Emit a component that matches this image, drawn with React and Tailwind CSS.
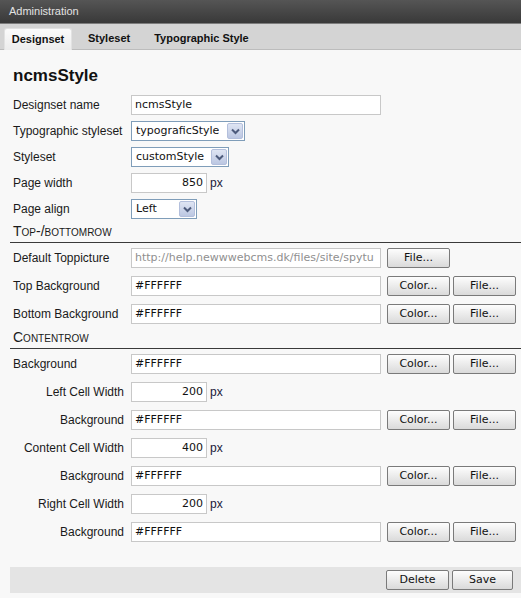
import React from 'react';

const sans = "font-['Liberation_Sans',Arial,sans-serif]";
const verd = "font-['DejaVu_Sans',Verdana,sans-serif]";

function Input({ value, wide = true, right = false, gray = false }) {
  return (
    <div
      className={`h-[20px] ${wide ? 'w-[250px]' : 'w-[76px]'} bg-white border border-[#c8c8c8] flex items-center px-[3px] overflow-hidden whitespace-nowrap ${verd} text-[11px] ${right ? 'justify-end' : ''} ${gray ? 'text-[#8f8f8f]' : 'text-[#111]'}`}
    >
      {value}
    </div>
  );
}

function Select({ value, w }) {
  return (
    <div className={`h-[20px] ${w} bg-white border border-[#7f9db9] flex items-center justify-between pl-[4px] pr-[1px] ${verd} text-[11px] text-[#111]`}>
      <span className="whitespace-nowrap overflow-hidden">{value}</span>
      <span className="w-[16px] h-[16px] shrink-0 ml-[2px] rounded-[2px] border border-[#b3bfdc] bg-gradient-to-b from-[#dfe5f3] to-[#bcc7e2] flex items-center justify-center">
        <svg width="9" height="7" viewBox="0 0 9 7">
          <path d="M1 1.5 L4.5 5 L8 1.5" fill="none" stroke="#4d5b7c" strokeWidth="2" />
        </svg>
      </span>
    </div>
  );
}

function Btn({ children, w = 'w-[63px]' }) {
  return (
    <div className={`h-[20px] ${w} shrink-0 border border-[#7a7a7a] rounded-[2px] bg-gradient-to-b from-[#fdfdfd] to-[#dadada] flex items-center justify-center ${verd} text-[11px] text-[#111]`}>
      {children}
    </div>
  );
}

function Row({ label, right = false, children }) {
  return (
    <div className="flex items-center h-[20px]">
      <div className={`w-[112px] ml-[3px] mr-[6px] ${sans} text-[12px] text-[#1a1a1a] whitespace-nowrap ${right ? 'text-right pr-[1px]' : ''}`}>
        {label}
      </div>
      {children}
    </div>
  );
}

function Px() {
  return <span className={`ml-[3px] ${sans} text-[12px] text-[#1a1a3a]`}>px</span>;
}

function ColorFile() {
  return (
    <>
      <div className="w-[6px]" />
      <Btn w="w-[63px]">Color...</Btn>
      <div className="w-[3px]" />
      <Btn w="w-[63px]">File...</Btn>
    </>
  );
}

function Section({ title, mt }) {
  return (
    <div className={`${mt} h-[23px] border-b border-[#3a3a3a] pl-[3px] pt-[3px] ${sans} text-[14px] leading-[16px] text-[#1a1a1a] [font-variant:small-caps]`}>
      {title}
    </div>
  );
}

export default function App() {
  return (
    <div className="w-[521px] h-[598px] bg-[#f8f8f8] overflow-hidden">
      {/* Header */}
      <div className={`h-[24px] bg-gradient-to-b from-[#555555] to-[#393939] border-b border-[#7c7c7c] flex items-center pl-[9px] ${sans} text-[11px] text-[#e2e2e2]`}>
        Administration
      </div>

      {/* Tabs */}
      <div className={`h-[26px] bg-[#d4d4d4] border-b border-[#bcbcbc] flex items-end pl-[4px] ${sans} text-[11px] font-bold text-[#111]`}>
        <div className="h-[22px] w-[68px] -mb-px rounded-t-[3px] bg-gradient-to-b from-[#fbfbfb] to-[#ececec] border-t border-x border-[#e2e2e2] flex items-center justify-center">
          Designset
        </div>
        <div className="h-[22px] flex items-center pl-[16px] pr-[12px]">Styleset</div>
        <div className="h-[22px] flex items-center px-[12px]">Typographic Style</div>
      </div>

      {/* Content */}
      <div className="pl-[10px]">
        <div className={`mt-[16px] pl-[3px] ${sans} text-[17px] leading-[20px] font-bold text-[#111]`}>ncmsStyle</div>

        <div className="mt-[9px] flex flex-col gap-[6px]">
          <Row label="Designset name"><Input value="ncmsStyle" /></Row>
          <Row label="Typographic styleset"><Select value="typograficStyle" w="w-[114px]" /></Row>
          <Row label="Styleset"><Select value="customStyle" w="w-[98px]" /></Row>
          <Row label="Page width"><Input value="850" wide={false} right /><Px /></Row>
          <Row label="Page align"><Select value="Left" w="w-[66px]" /></Row>
        </div>

        <Section title="Top-/bottomrow" mt="mt-[1px]" />

        <div className="mt-[5px] flex flex-col gap-[8px]">
          <Row label="Default Toppicture">
            <Input value="http://help.newwwebcms.dk/files/site/spytu" gray />
            <div className="w-[6px]" />
            <Btn w="w-[63px]">File...</Btn>
          </Row>
          <Row label="Top Background"><Input value="#FFFFFF" /><ColorFile /></Row>
          <Row label="Bottom Background"><Input value="#FFFFFF" /><ColorFile /></Row>
        </div>

        <Section title="Contentrow" mt="mt-[2px]" />

        <div className="mt-[5px] flex flex-col gap-[8px]">
          <Row label="Background"><Input value="#FFFFFF" /><ColorFile /></Row>
          <Row label="Left Cell Width" right><Input value="200" wide={false} right /><Px /></Row>
          <Row label="Background" right><Input value="#FFFFFF" /><ColorFile /></Row>
          <Row label="Content Cell Width" right><Input value="400" wide={false} right /><Px /></Row>
          <Row label="Background" right><Input value="#FFFFFF" /><ColorFile /></Row>
          <Row label="Right Cell Width" right><Input value="200" wide={false} right /><Px /></Row>
          <Row label="Background" right><Input value="#FFFFFF" /><ColorFile /></Row>
        </div>

        {/* Footer */}
        <div className="mt-[25px] h-[26px] bg-[#e4e4e4] flex justify-end items-start pt-[3px] pr-[8px] gap-[3px]">
          <Btn w="w-[63px]">Delete</Btn>
          <Btn w="w-[61px]">Save</Btn>
        </div>
      </div>
    </div>
  );
}
